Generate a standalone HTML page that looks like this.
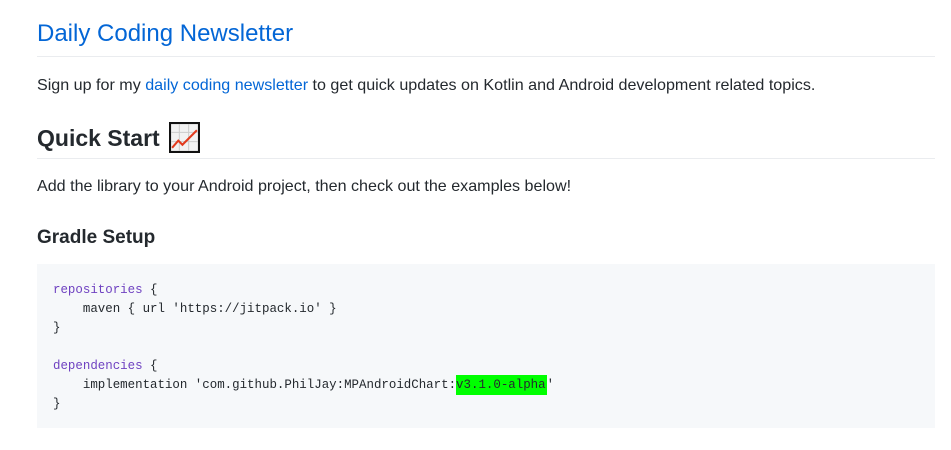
<!DOCTYPE html>
<html><head><style>
body{margin:0;background:#fff;font-family:"Liberation Sans",sans-serif;color:#24292e;width:951px;height:450px;overflow:hidden;position:relative}
.a{position:absolute;left:37px;white-space:nowrap}
.rule{position:absolute;left:37px;width:898px;height:1px;background:#eaecef}
a{color:#0366d6;text-decoration:none}
pre{position:absolute;left:37px;top:264px;width:898px;height:164px;margin:0;background:#f6f8fa;box-sizing:border-box;padding:17px 16px;font-family:"Liberation Mono",monospace;font-size:12.45px;line-height:19px;color:#24292e}
.k{color:#6f42c1}
</style></head><body>
<div class="a" style="top:20px;font-size:24px;color:#0366d6;font-weight:400">Daily Coding Newsletter</div>
<div class="rule" style="top:56px"></div>
<div class="a" style="top:76px;font-size:16.1px">Sign up for my <a>daily coding newsletter</a> to get quick updates on Kotlin and Android development related topics.</div>
<div class="a" style="top:122px;font-size:23px;font-weight:600">Quick Start<svg width="31" height="31" viewBox="0 0 30 30" style="vertical-align:-7px;margin-left:9px"><rect x="1" y="1" width="28" height="28" fill="#f2f2f2" stroke="#111" stroke-width="2"/><path d="M10 2V28M19 2V28M2 10H28M2 19H28" stroke="#ccc" stroke-width="1"/><path d="M3 25L9 18L13 22L27 8" fill="none" stroke="#e23b1e" stroke-width="2"/></svg></div>
<div class="rule" style="top:158px"></div>
<div class="a" style="top:177px;font-size:16.1px">Add the library to your Android project, then check out the examples below!</div>
<div class="a" style="top:227px;font-size:19px;font-weight:600">Gradle Setup</div>
<pre><span class="k">repositories</span> {
    maven { url 'https://jitpack.io' }
}

<span class="k">dependencies</span> {
    implementation 'com.github.PhilJay:MPAndroidChart:<span style="background:#00ff00;padding:3px 1px 3px 0">v3.1.0-alpha</span>'
}</pre>
</body></html>
